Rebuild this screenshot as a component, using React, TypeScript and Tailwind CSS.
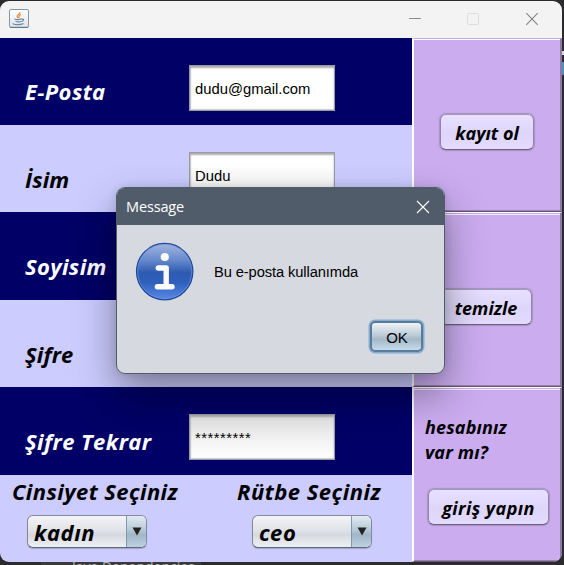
import React from "react";

const bold = "font-['Open_Sans','Noto_Sans',sans-serif] font-bold italic whitespace-nowrap";

function JavaIcon() {
  return (
    <svg width="20" height="19" viewBox="0 0 20 19">
      <defs>
        <linearGradient id="jbg" x1="0" y1="0" x2="0" y2="1">
          <stop offset="0" stopColor="#fff" />
          <stop offset="1" stopColor="#dfe3e6" />
        </linearGradient>
      </defs>
      <rect x="0.5" y="0.5" width="19" height="18" rx="1.5" fill="url(#jbg)" stroke="#8496a7" />
      <path d="M1 18.3H19" stroke="#4e687f" strokeWidth="0.8" />
      <path d="M10.8 3C12 5 7.6 5.7 8.2 7.5C8.4 8.3 9 8.5 9 9.2M11.7 5.5C9.5 6.5 10.5 7.5 9.8 8.8" fill="none" stroke="#ee8c43" strokeWidth="1.3" />
      <path d="M5.5 10C7 10.7 11 10.5 13 9.8M6.5 12.2C8 12.9 11.2 12.8 12.5 12.2M13 10.2C15.5 9.8 14.8 12 12.8 12.4M4.3 14.1C2.8 16 12 16.2 14.5 14.4" fill="none" stroke="#6d8ba5" strokeWidth="1.2" />
    </svg>
  );
}

function TitleBar() {
  return (
    <div className="flex h-[37px] shrink-0 items-start bg-[#f3f3f3] pl-[9px] pt-2">
      <JavaIcon />
      <svg className="ml-[379px]" width="132" height="20" viewBox="0 0 132 20" fill="none">
        <path d="M1 9.5H13" stroke="#8b8b8b" />
        <rect x="59.5" y="4.5" width="11" height="11" rx="1" stroke="#dddddd" />
        <path d="M118.3 4.2L129.7 15.8M129.7 4.2L118.3 15.8" stroke="#858585" strokeWidth="1.1" />
      </svg>
    </div>
  );
}

function Field({ children, className = "" }: { children?: React.ReactNode; className?: string }) {
  return (
    <div
      className={`flex h-[46px] w-[146px] items-center border border-[#9a9aa3] pl-[5px] pt-[2px] font-['Liberation_Sans',Arial,sans-serif] text-[14.8px] text-black shadow-[inset_0_2px_2px_#aaaaaa,inset_1px_-1px_1px_#cccccc] ${className}`}
    >
      {children}
    </div>
  );
}

function Row({ label, dark, labelClass, children }: { label: string; dark?: boolean; labelClass: string; children?: React.ReactNode }) {
  return (
    <div className={`flex items-start pl-[25px] ${dark ? "bg-[#000066] text-white" : "bg-[#ccccff] text-black"}`}>
      <div className={`${bold} w-[164px] shrink-0 text-[22px] leading-[30px] ${labelClass}`}>{label}</div>
      <div className="pt-[27px]">{children}</div>
    </div>
  );
}

function Combo({ value }: { value: string }) {
  return (
    <div className="flex h-[33px] w-[120px] overflow-hidden rounded-[6px] border border-[#858b9b] border-b-[#616a77] bg-[linear-gradient(#f4f4f6_0%,#e1e3e8_45%,#d5d9df_60%,#eef0f3_100%)] shadow-[0_1px_1px_#a2a2cc]">
      <div className={`${bold} w-[98px] pl-1.5 pt-px text-[22px] leading-[30px] tracking-[0.5px]`}>{value}</div>
      <div className="flex flex-1 justify-center border-l border-[#8099ad] bg-[linear-gradient(#e2eaf0_0%,#b6c8d6_45%,#a0b7c8_60%,#bdd1e0_100%)] pt-[11px]">
        <svg width="10" height="9" viewBox="0 0 10 9">
          <path d="M0.5 0.5H9.5L5 8.5Z" fill="#222" />
        </svg>
      </div>
    </div>
  );
}

function SideButton({ children, className }: { children: React.ReactNode; className: string }) {
  return (
    <div className={`${bold} flex h-9 items-center justify-center rounded-[6px] border-[1.5px] border-[#9385a6] border-b-[#6f607c] border-t-[#a398b8] bg-[linear-gradient(#e8e0ff,#ded6fa_55%,#e4dcff)] pt-[2px] text-[18px] leading-6 shadow-[0_0_1px_1px_#a892c4] ${className}`}>
      {children}
    </div>
  );
}

function SidePanel({ children, className = "" }: { children: React.ReactNode; className?: string }) {
  return (
    <div className={`border-b border-l-2 border-r-2 border-t border-b-[#695774] border-l-white border-r-[#8d78a1] bg-[#caacef] ${className}`}>
      {children}
    </div>
  );
}

const panelEdges = "border-t-white shadow-[inset_0_1px_0_#caacef,inset_0_2px_0_#f4ecfc,inset_0_-1px_0_#9981b0]";
const firstPanelEdges = "border-t-[#c3a6e8] shadow-[inset_0_1px_0_#ffffff,inset_0_-1px_0_#9981b0]";

function InfoIcon() {
  return (
    <svg width="60" height="60" viewBox="0 0 60 60">
      <defs>
        <linearGradient id="info" x1="0" y1="0" x2="0" y2="1">
          <stop offset="0" stopColor="#a3b7e2" />
          <stop offset="0.3" stopColor="#6688cb" />
          <stop offset="0.52" stopColor="#2d5ab2" />
          <stop offset="0.7" stopColor="#2e60bd" />
          <stop offset="1" stopColor="#5b8ae6" />
        </linearGradient>
      </defs>
      <circle cx="29.7" cy="29.6" r="28.2" fill="url(#info)" stroke="#21499a" strokeWidth="1.2" />
      <circle cx="29.7" cy="29.6" r="27" fill="none" stroke="#7598db" strokeWidth="0.8" opacity="0.7" />
      <circle cx="29.8" cy="15" r="4.1" fill="#fafaff" />
      <path d="M23.3 26H31.2V44.6M22.4 44.7H37" fill="none" stroke="#fafaff" strokeWidth="5.4" strokeLinecap="round" strokeLinejoin="round" />
    </svg>
  );
}

function MessageDialog() {
  return (
    <div className="absolute left-[116px] top-[187px] h-[187px] w-[329px] overflow-hidden rounded-[9px] border border-[#505c69] bg-[#d6d9e0]">
      <div className="flex h-[37px] items-center justify-between bg-[#505c69] pl-[9px] pr-[14px]">
        <span className="font-['Open_Sans','Noto_Sans',sans-serif] text-[14.5px] tracking-[-0.15px] text-white">Message</span>
        <svg width="14" height="14" viewBox="0 0 14 14">
          <path d="M1 1L13 13M13 1L1 13" stroke="#fff" strokeWidth="1.1" />
        </svg>
      </div>
      <div className="flex pl-[18px] pt-[17px]">
        <InfoIcon />
        <span className="ml-[19px] mt-[20px] font-['Liberation_Sans',Arial,sans-serif] text-[14.7px] leading-5 tracking-[-0.1px] text-black">Bu e-posta kullanımda</span>
      </div>
      <div className="flex justify-end pr-[21px] pt-[19px]">
        <div className="flex h-[31px] w-[53px] items-center justify-center rounded-[5px] border-2 border-[#587b9c] bg-[linear-gradient(#eef2f5_0%,#bdccd7_45%,#a4b8c7_60%,#c5d9e8_100%)] pl-px pt-[3px] font-['Liberation_Sans',Arial,sans-serif] text-[15px] text-black shadow-[0_0_0_1.5px_#83add1]">
          OK
        </div>
      </div>
    </div>
  );
}

export default function App() {
  return (
    <div className="relative h-[565px] w-[564px] overflow-hidden bg-[#2b2b2e] pt-px">
      <div className="flex h-[561px] w-[562px] flex-col overflow-hidden rounded-[9px]">
        <TitleBar />
        <div className="flex min-h-0 flex-1 text-black">
          <div className="grid w-[412px] grid-rows-[87px_87px_88px_87px_88px_87px]">
            <Row label="E-Posta" dark labelClass="pt-[38px] tracking-[0.4px]">
              <Field className="bg-white">dudu@gmail.com</Field>
            </Row>
            <Row label="İsim" labelClass="pt-[39px] tracking-[0.1px]">
              <Field className="bg-[linear-gradient(#ffffff_30%,#f2f2f2)]">Dudu</Field>
            </Row>
            <Row label="Soyisim" dark labelClass="pt-[39px] tracking-[0.35px]" />
            <Row label="Şifre" labelClass="pt-[39px] tracking-[0.1px]" />
            <Row label="Şifre Tekrar" dark labelClass="pt-[39px] tracking-[0.4px]">
              <Field className="bg-[linear-gradient(#e2e2e2,#ffffff)] tracking-[0.5px]">*********</Field>
            </Row>
            <div className="flex bg-[#ccccff] pl-3 pt-px">
              <div className="w-[225px]">
                <div className={`${bold} text-[22px] leading-[30px] tracking-[0.4px]`}>Cinsiyet Seçiniz</div>
                <div className="pl-[15px] pt-[9px]">
                  <Combo value="kadın" />
                </div>
              </div>
              <div>
                <div className={`${bold} text-[22px] leading-[30px] tracking-[0.48px]`}>Rütbe Seçiniz</div>
                <div className="pl-[15px] pt-[9px]">
                  <Combo value="ceo" />
                </div>
              </div>
            </div>
          </div>
          <div className="grid w-[150px] grid-rows-[174px_175px_175px]">
            <SidePanel className={`pl-[26px] pt-[75px] ${firstPanelEdges}`}>
              <SideButton className="w-[94px]">kayıt ol</SideButton>
            </SidePanel>
            <SidePanel className={`pl-[26px] pt-[76px] ${panelEdges}`}>
              <SideButton className="w-[92px]">temizle</SideButton>
            </SidePanel>
            <SidePanel className={`pl-[11px] pt-[27px] ${panelEdges}`}>
              <div className={`${bold} text-[18px] leading-[25px] tracking-[0.15px]`}>
                hesabınız
                <br />
                var mı?
              </div>
              <SideButton className="ml-[3px] mt-[24px] w-[121px] tracking-[0.4px]">giriş yapın</SideButton>
            </SidePanel>
          </div>
        </div>
      </div>
      <div className="absolute left-[116px] top-[187px] h-[187px] w-[329px] rounded-[9px] shadow-[0_20px_42px_rgba(0,0,0,0.38),0_0_8px_rgba(0,0,0,0.12)]" />
      <MessageDialog />
      <div className="absolute left-[41px] top-[562px] h-[3px] w-[160px] overflow-hidden bg-[#3a3a3d]">
        <span className="ml-[31px] block font-['Open_Sans',sans-serif] text-[14px] leading-[10px] text-[#b5b5b5]">Java Dependencies</span>
      </div>
      <div className="absolute left-[562px] top-[51px] h-[24px] w-[2px] bg-[linear-gradient(#d5d5d5_0_4px,#2b2b2e_4px_11px,#4e8fb5_11px_24px)]" />
    </div>
  );
}
